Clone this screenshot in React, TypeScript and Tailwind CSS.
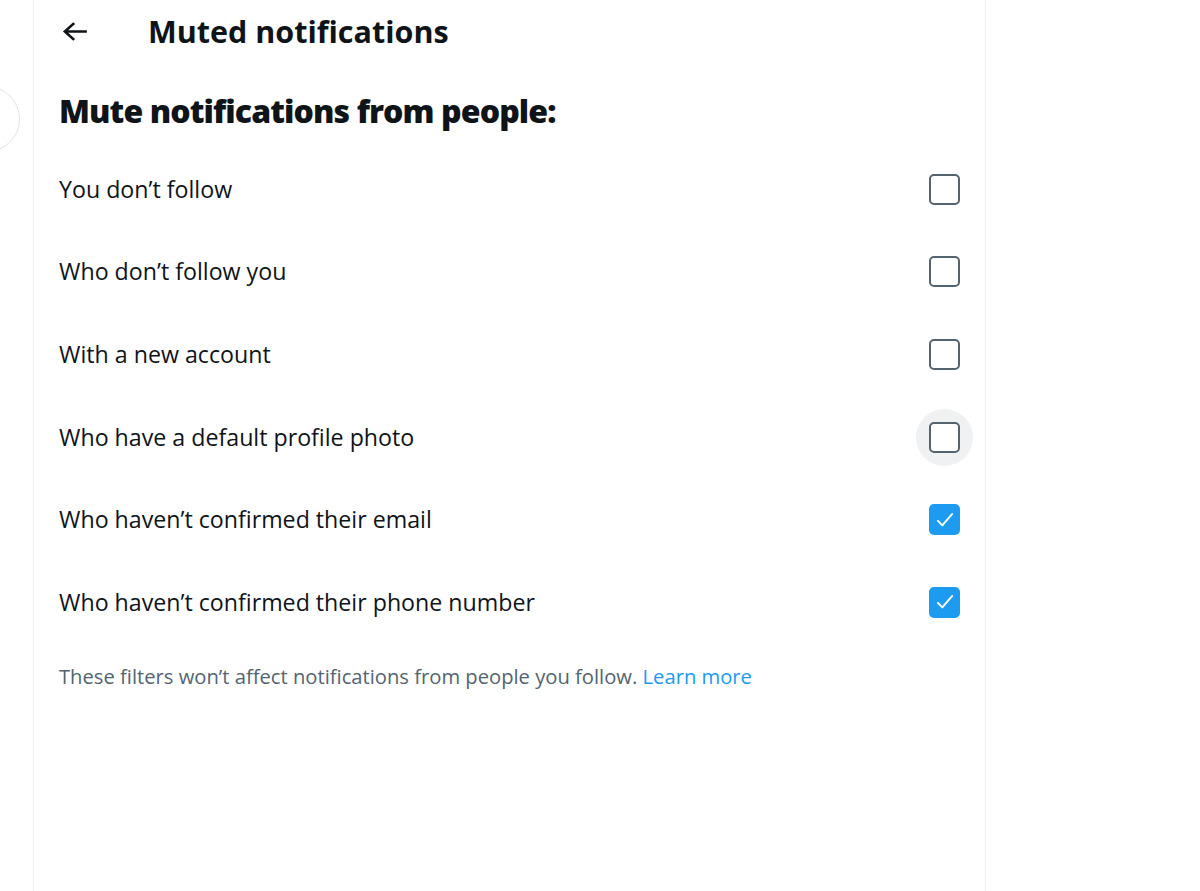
import React from "react";

const rows: { label: string; checked: boolean; hover?: boolean }[] = [
  { label: "You don’t follow", checked: false },
  { label: "Who don’t follow you", checked: false },
  { label: "With a new account", checked: false },
  { label: "Who have a default profile photo", checked: false, hover: true },
  { label: "Who haven’t confirmed their email", checked: true },
  { label: "Who haven’t confirmed their phone number", checked: true },
];

function Box({ checked, hover }: { checked: boolean; hover?: boolean }) {
  return (
    <div
      className={
        "w-[57px] h-[57px] rounded-full flex items-center justify-center " +
        (hover ? "bg-[#eff1f2]" : "")
      }
    >
      {checked ? (
        <div className="w-[31px] h-[31px] rounded-[5px] bg-[#1d9bf0] flex items-center justify-center">
          <svg width="26" height="26" viewBox="0 0 24 24" fill="none">
            <path d="M5.5 12.8l4 4.2L18.5 6.5" stroke="white" strokeWidth="1.8" strokeLinecap="round" strokeLinejoin="round" />
          </svg>
        </div>
      ) : (
        <div className="w-[31px] h-[31px] rounded-[5px] border-[2.5px] border-[#536471] bg-white" />
      )}
    </div>
  );
}

export default function App() {
  return (
    <div className="w-[1200px] h-[891px] bg-white flex overflow-hidden" style={{ fontFamily: '"Open Sans", "Noto Sans", sans-serif' }}>
      <div className="w-[33px] shrink-0 relative overflow-hidden">
        <div className="absolute left-[-46px] top-[86px] w-[66px] h-[66px] rounded-full border border-[#dfe3e5]" />
      </div>
      <div className="w-[953px] shrink-0 border-l border-r border-[#eff3f4] h-full flex flex-col">
        <div className="h-[63px] flex items-center pl-[24px]">
          <svg width="33" height="33" viewBox="0 0 24 24" className="text-[#0f1419]">
            <path fill="currentColor" d="M7.414 13l5.043 5.04-1.414 1.42L3.586 12l7.457-7.46 1.414 1.42L7.414 11H21v2H7.414z" transform="translate(12 12) scale(1 0.9) translate(-12 -12)" />
          </svg>
          <div className="ml-[57px] text-[30.5px] font-bold text-[#0f1419]">Muted notifications</div>
        </div>
        <div className="px-[25px] pt-[26px] pb-[15px] text-[32px] font-extrabold text-[#0f1419] leading-[44px] tracking-[-0.9px]">
          Mute notifications from people:
        </div>
        <div className="flex flex-col">
          {rows.map((r) => (
            <div key={r.label} className="h-[82.6px] flex items-center justify-between pl-[25px] pr-[12px]">
              <span className="text-[23.2px] text-[#0f1419]">{r.label}</span>
              <Box checked={r.checked} hover={r.hover} />
            </div>
          ))}
        </div>
        <div className="px-[25px] pt-[17px] text-[20.2px] text-[#536471]">
          These filters won’t affect notifications from people you follow.{" "}
          <span className="text-[#1d9bf0]">Learn more</span>
        </div>
      </div>
      <div className="flex-1" />
    </div>
  );
}
